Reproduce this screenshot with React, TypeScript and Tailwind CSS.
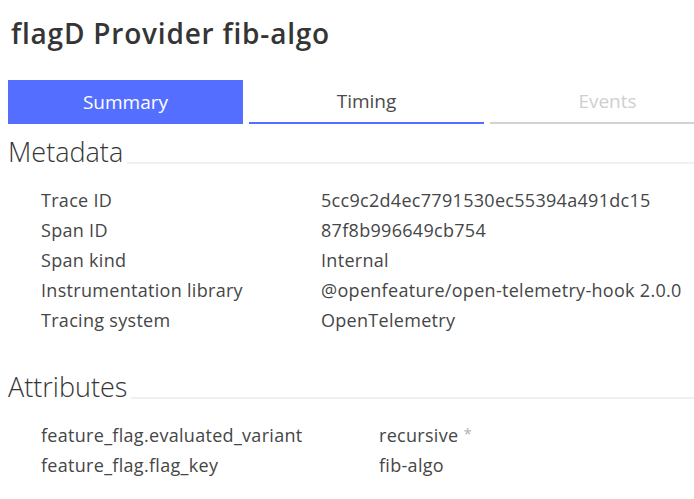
import React from "react";

const font = { fontFamily: '"Open Sans", "Noto Sans", sans-serif' };

function Row({ label, value, valueX, extra }: { label: string; value: string; valueX: string; extra?: React.ReactNode }) {
  return (
    <div className="flex h-[30px] items-center text-[18px] tracking-[0.3px] text-[#454646]">
      <div className={`${valueX} shrink-0 pl-[41px]`}>{label}</div>
      <div className="whitespace-nowrap">
        {value}
        {extra}
      </div>
    </div>
  );
}

export default function App() {
  return (
    <div className="w-[694px] h-[499px] overflow-hidden bg-white" style={font}>
      <h1 className="pl-[11px] pt-[13px] h-[80px] text-[28px] tracking-[0.8px] font-semibold text-[#353535] leading-[40px] whitespace-nowrap">
        flagD Provider fib-algo
      </h1>
      <div className="flex gap-[6px] pl-[8px] w-[800px]">
        <div className="w-[235px] h-[44px] bg-[#546eff] flex items-center justify-center text-[19px] text-white">
          Summary
        </div>
        <div className="w-[235px] h-[44px] border-b-2 border-[#546eff] flex items-center justify-center text-[19px] text-[#4a4a4a]">
          Timing
        </div>
        <div className="w-[235px] h-[44px] border-b-2 border-[#d2d2d2] flex items-center justify-center text-[19px] text-[#cfcfcf]">
          Events
        </div>
      </div>
      <div className="flex items-end pl-[8px] mt-[13px] h-[30px]">
        <span className="text-[27px] font-light text-[#353535] leading-[30px]">Metadata</span>
        <div className="flex-1 ml-[4px] mb-[3px] h-[2px] bg-[#f0f0f0]" />
      </div>
      <div className="mt-[18px]">
        <Row label="Trace ID" value="5cc9c2d4ec7791530ec55394a491dc15" valueX="w-[321px]" />
        <Row label="Span ID" value="87f8b996649cb754" valueX="w-[321px]" />
        <Row label="Span kind" value="Internal" valueX="w-[321px]" />
        <Row label="Instrumentation library" value="@openfeature/open-telemetry-hook 2.0.0" valueX="w-[321px]" />
        <Row label="Tracing system" value="OpenTelemetry" valueX="w-[321px]" />
      </div>
      <div className="flex items-end pl-[8px] mt-[37px] h-[30px]">
        <span className="text-[27px] font-light text-[#353535] leading-[30px]">Attributes</span>
        <div className="flex-1 ml-[4px] mb-[3px] h-[2px] bg-[#f0f0f0]" />
      </div>
      <div className="mt-[18px]">
        <Row
          label="feature_flag.evaluated_variant"
          value="recursive"
          valueX="w-[379px]"
          extra={<span className="ml-[5px] text-[#b0b0b0] align-top text-[15px]">*</span>}
        />
        <Row label="feature_flag.flag_key" value="fib-algo" valueX="w-[379px]" />
      </div>
    </div>
  );
}
